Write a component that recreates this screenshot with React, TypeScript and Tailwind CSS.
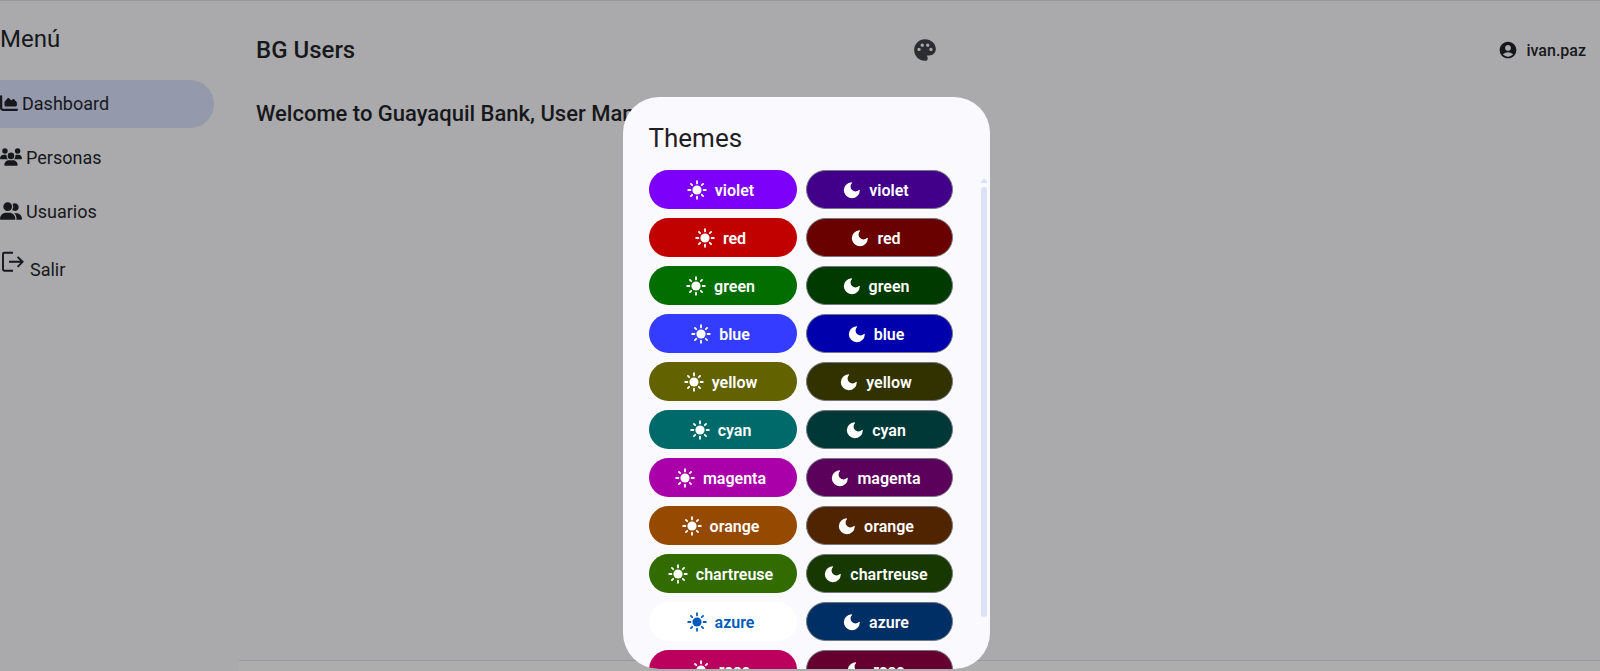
import React from "react";
import { FaChartArea, FaUsers, FaUserGroup } from "react-icons/fa6";
import { MdAccountCircle, MdPalette } from "react-icons/md";

type Theme = { name: string; light: string; dark: string };

const themes: Theme[] = [
  { name: "violet", light: "bg-[#7d00fa] text-white", dark: "bg-[#42008a]" },
  { name: "red", light: "bg-[#c00100] text-white", dark: "bg-[#690100]" },
  { name: "green", light: "bg-[#026e00] text-white", dark: "bg-[#013a00]" },
  { name: "blue", light: "bg-[#343dff] text-white", dark: "bg-[#0001ac]" },
  { name: "yellow", light: "bg-[#626200] text-white", dark: "bg-[#323200]" },
  { name: "cyan", light: "bg-[#006a6a] text-white", dark: "bg-[#003737]" },
  { name: "magenta", light: "bg-[#a900a9] text-white", dark: "bg-[#5b005b]" },
  { name: "orange", light: "bg-[#964900] text-white", dark: "bg-[#502400]" },
  { name: "chartreuse", light: "bg-[#326b00] text-white", dark: "bg-[#173800]" },
  { name: "azure", light: "bg-white text-[#005cbb]", dark: "bg-[#002f65]" },
  { name: "rose", light: "bg-[#ba005c] text-white", dark: "bg-[#65002f]" },
];

function LogoutIcon() {
  return (
    <svg viewBox="0 0 24 22" className="h-[22px] w-6" fill="none" stroke="currentColor" strokeWidth="1.9" aria-hidden="true">
      <path d="M13 1.8H4.2Q3 1.8 3 3v15.6q0 1.2 1.2 1.2H13M9 10.8h13.5M17.6 5.8l5 5-5 5" />
    </svg>
  );
}

function SunIcon() {
  return (
    <svg viewBox="0 0 20 20" className="mb-0.5 size-5" aria-hidden="true">
      <circle cx="10" cy="10" r="4.6" fill="currentColor" />
      <path
        d="M10 1.2v2.2M10 16.6v2.2M1.2 10h2.2M16.6 10h2.2M3.9 3.9l1.3 1.3M14.8 14.8l1.3 1.3M3.9 16.1l1.3-1.3M14.8 5.2l1.3-1.3"
        stroke="currentColor"
        strokeWidth="1.8"
        strokeLinecap="round"
      />
    </svg>
  );
}

function MoonIcon() {
  return (
    <svg viewBox="0 0 20 20" className="mb-0.5 size-5 fill-current" aria-hidden="true">
      <path d="M10.6 2.2A8 8 0 1 0 18.8 10.4 .6 .6 0 0 0 17.9 9.9 4.7 4.7 0 0 1 10.9 3.2 .7 .7 0 0 0 10.6 2.2z" />
    </svg>
  );
}

const link = "flex h-12 items-center text-lg";

export default function App() {
  return (
    <div className="relative flex h-screen overflow-hidden border-t border-[#98989a] bg-[#aaaaac] font-[Roboto,sans-serif] text-[#17181b]">
      <aside className="w-[239px] shrink-0">
        <h2 className="mt-5 text-2xl leading-9">Menú</h2>
        <nav className="mt-[23px] flex flex-col gap-1.5">
          <a href="#dashboard" className={`${link} mr-[25px] rounded-r-full bg-[#949aac]`}>
            <FaChartArea className="mr-1 mb-0.5 size-[18px]" />
            Dashboard
          </a>
          <a href="#personas" className={link}>
            <FaUsers className="mr-1 mb-0.5 size-[22px]" />
            Personas
          </a>
          <a href="#usuarios" className={link}>
            <FaUserGroup className="mr-1 mb-0.5 size-[22px]" />
            Usuarios
          </a>
          <a href="#salir" className={`${link} pt-2`}>
            <span className="mr-1.5 pb-4"><LogoutIcon /></span>
            Salir
          </a>
        </nav>
      </aside>
      <main className="flex grow flex-col">
        <header className="flex h-[98px] items-center pr-[14px] pl-[17px] font-medium">
          <h1 className="flex-1 text-2xl">BG Users</h1>
          <button type="button" aria-label="Themes" className="ml-2 text-[#2b2d33]">
            <MdPalette className="size-[26px]" />
          </button>
          <div className="flex flex-1 items-center justify-end gap-2 pt-0.5 text-base">
            <MdAccountCircle className="mb-0.5 size-5" />
            ivan.paz
          </div>
        </header>
        <h2 className="px-[17px] text-[22px] leading-[30px] font-medium">Welcome to Guayaquil Bank, User Management</h2>
        <footer className="mt-auto h-[11px] border-t border-[#98989a] bg-[#adadad]" />
      </main>

      <div className="absolute inset-0 flex items-end justify-center pb-0.5 pl-3">
        <section role="dialog" aria-labelledby="themes-title" className="flex h-[572px] w-[367px] flex-col overflow-hidden rounded-[36px] bg-[#faf9fd] pl-[26px] text-[#1f2024]">
          <h2 id="themes-title" className="pt-[25px] pb-4 text-[26px] leading-8">Themes</h2>
          <div className="flex min-h-0 grow justify-between overflow-hidden pr-[2px]">
            <ul className="flex flex-col gap-[9px]">
              {themes.map((t) => (
                <li key={t.name} className="flex shrink-0 gap-[9px] text-base font-semibold">
                  <button type="button" className={`flex h-[39px] w-[148px] items-center justify-center gap-2 rounded-full pr-1 pt-0.5 ${t.light}`}>
                    <SunIcon />
                    {t.name}
                  </button>
                  <button type="button" className={`flex h-[39px] w-[147px] items-center justify-center gap-2 rounded-full border border-[#74777f] pr-2 pt-0.5 text-white ${t.dark}`}>
                    <MoonIcon />
                    {t.name}
                  </button>
                </li>
              ))}
            </ul>
            <div className="flex w-2 flex-col items-center pt-2" aria-hidden="true">
              <svg viewBox="0 0 8 5" className="h-[5px] w-2 fill-[#d7e3ff]"><path d="M4 0l4 5H0z" /></svg>
              <div className="mt-1 h-[430px] w-1.5 rounded-full bg-[#dae2f9]" />
            </div>
          </div>
        </section>
      </div>
    </div>
  );
}
